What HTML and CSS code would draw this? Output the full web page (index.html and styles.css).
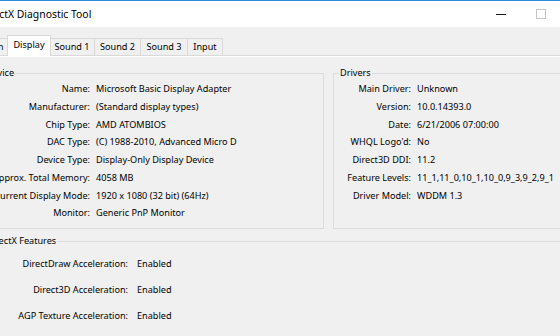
FILE: index.html
```html
<!DOCTYPE html>
<html>
<head>
<meta charset="utf-8">
<title>DirectX Diagnostic Tool</title>
<link rel="stylesheet" href="styles.css">
</head>
<body>
<div class="window">
  <div class="titlebar">
    <span class="title">DirectX Diagnostic Tool</span>
    <span class="spacer"></span>
    <span class="ctl ctl-min"><span class="min-glyph"></span></span>
    <span class="ctl ctl-max"><span class="max-glyph"></span></span>
    <span class="ctl ctl-close"></span>
  </div>
  <div class="tabbar">
    <div class="tab tab-system">System</div>
    <div class="tab tab-display active">Display</div>
    <div class="tab tab-s1">Sound 1</div>
    <div class="tab tab-s2">Sound 2</div>
    <div class="tab tab-s3">Sound 3</div>
    <div class="tab tab-input">Input</div>
  </div>
  <div class="page">
    <div class="top-groups">
      <div class="group group-device">
        <div class="group-title">Device</div>
        <div class="rows rows-device">
          <span class="k">Name:</span><span class="v">Microsoft Basic Display Adapter</span>
          <span class="k">Manufacturer:</span><span class="v">(Standard display types)</span>
          <span class="k">Chip Type:</span><span class="v">AMD ATOMBIOS</span>
          <span class="k">DAC Type:</span><span class="v">(C) 1988-2010, Advanced Micro D</span>
          <span class="k">Device Type:</span><span class="v">Display-Only Display Device</span>
          <span class="k">Approx. Total Memory:</span><span class="v">4058 MB</span>
          <span class="k">Current Display Mode:</span><span class="v">1920 x 1080 (32 bit) (64Hz)</span>
          <span class="k">Monitor:</span><span class="v">Generic PnP Monitor</span>
        </div>
      </div>
      <div class="group group-drivers">
        <div class="group-title">Drivers</div>
        <div class="rows rows-drivers">
          <span class="k">Main Driver:</span><span class="v">Unknown</span>
          <span class="k">Version:</span><span class="v">10.0.14393.0</span>
          <span class="k">Date:</span><span class="v">6/21/2006 07:00:00</span>
          <span class="k">WHQL Logo'd:</span><span class="v">No</span>
          <span class="k">Direct3D DDI:</span><span class="v">11.2</span>
          <span class="k">Feature Levels:</span><span class="v">11_1,11_0,10_1,10_0,9_3,9_2,9_1</span>
          <span class="k">Driver Model:</span><span class="v">WDDM 1.3</span>
        </div>
      </div>
    </div>
    <div class="group group-features">
      <div class="group-title">DirectX Features</div>
      <div class="rows rows-features">
        <span class="k">DirectDraw Acceleration:</span><span class="v">Enabled</span>
        <span class="k">Direct3D Acceleration:</span><span class="v">Enabled</span>
        <span class="k">AGP Texture Acceleration:</span><span class="v">Enabled</span>
      </div>
    </div>
  </div>
</div>
</body>
</html>
```
FILE: styles.css
```css
html, body {
  margin: 0;
  padding: 0;
}
body {
  width: 560px;
  height: 336px;
  overflow: hidden;
  background: #f0f0f0;
  font-family: "Noto Sans", "Open Sans", sans-serif;
  font-size: 9.15px;
  color: #000;
}
.window {
  margin-left: -51px;
  width: 658px;
  border-top: 1px solid #2d8be0;
}
.titlebar {
  display: flex;
  align-items: center;
  height: 26px;
  background: #ffffff;
}
.title {
  margin-left: 30px;
  font-size: 10.4px;
  white-space: nowrap;
}
.spacer { flex: 1; }
.ctl {
  width: 40px;
  height: 26px;
  display: flex;
  align-items: center;
  justify-content: center;
}
.ctl-close { width: 46px; }
.min-glyph {
  width: 10px;
  height: 1px;
  background: #1a1a1a;
  margin-top: 1px;
}
.max-glyph {
  width: 8px;
  height: 8px;
  border: 1px solid #c6c6c6;
}
.tabbar {
  display: flex;
  align-items: flex-end;
  height: 28px;
  padding-left: 17px;
}
.tab {
  box-sizing: border-box;
  height: 17px;
  border: 1px solid #d9d9d9;
  border-bottom: none;
  margin-left: -1px;
  text-align: center;
  line-height: 16px;
  white-space: nowrap;
  background: #f0f0f0;
}
.tab-system { width: 44px; margin-left: 0; }
.tab-display { width: 44px; margin-left: -3px; }
.tab-s1 { width: 46px; margin-left: -2px; }
.tab-s2 { width: 47px; }
.tab-s3 { width: 48px; }
.tab-input { width: 36px; }
.tab.active {
  position: relative;
  z-index: 2;
  height: 21px;
  margin-bottom: -1px;
  background: #ffffff;
  line-height: 18px;
}
.page {
  border-top: 1px solid #d9d9d9;
  box-shadow: inset 0 1px 0 #ffffff;
  padding: 17px 0 0 30px;
  height: 300px;
}
.top-groups {
  display: flex;
  gap: 9px;
}
.group {
  box-sizing: border-box;
  border: 1px solid #dcdcdc;
}
.group-device { width: 345px; height: 156px; }
.group-drivers { width: 260px; height: 156px; }
.group-features {
  margin-top: 12px;
  width: 614px;
  height: 120px;
}
.group-title {
  width: fit-content;
  margin: -9px 0 0 5px;
  padding: 0 1px;
  line-height: 16px;
  background: #f0f0f0;
  white-space: nowrap;
}
.rows {
  display: grid;
  column-gap: 6px;
  margin-top: -1px;
  line-height: 17.75px;
  white-space: nowrap;
}
.k { text-align: right; }
.rows-device { grid-template-columns: 110px auto; }
.rows-drivers { grid-template-columns: 77px auto; }
.rows-features {
  grid-template-columns: 148px auto;
  column-gap: 9px;
  margin-top: 2px;
  line-height: 26px;
}
```
